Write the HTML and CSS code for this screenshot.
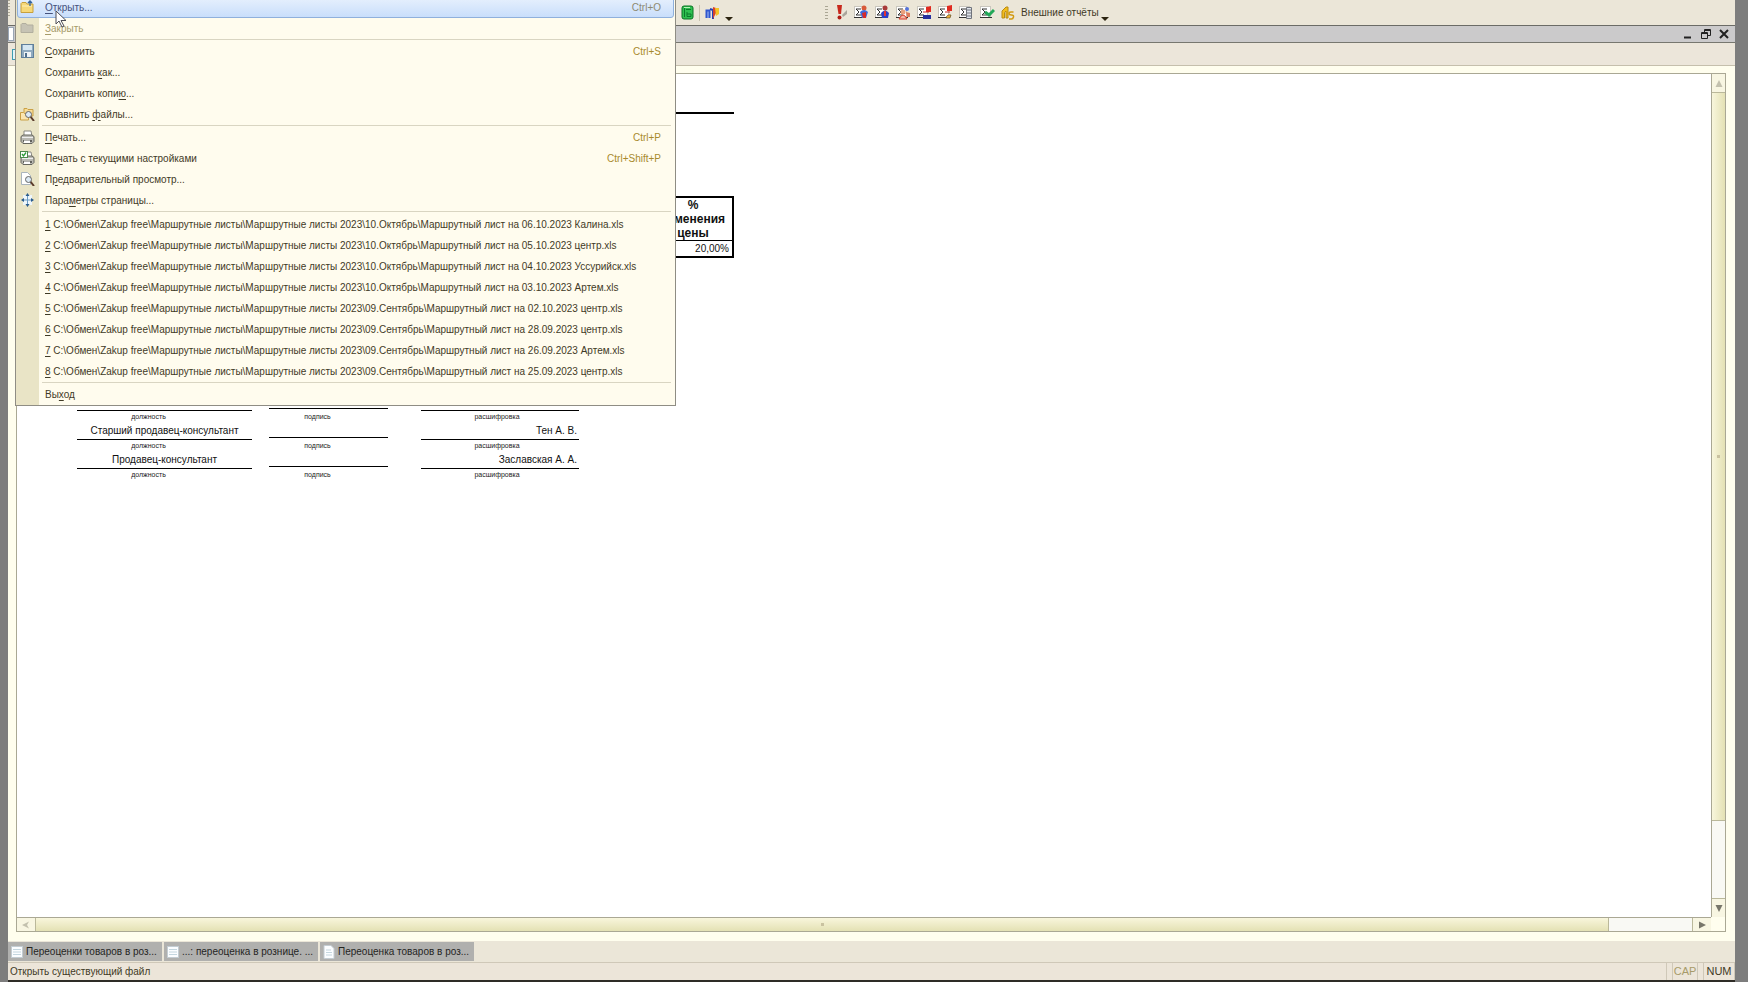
FILE: index.html
```html
<!DOCTYPE html>
<html lang="ru">
<head>
<meta charset="utf-8">
<title>Переоценка товаров в рознице</title>
<link rel="stylesheet" href="styles.css">
</head>
<body>
<svg width="0" height="0" class="defs" aria-hidden="true">
  <defs>
    <g id="sigma"><rect x="0.5" y="1.5" width="10" height="11" fill="#fff" stroke="#c9c6bd"/><path d="M7 4H2l3 3-3 3h5" fill="none" stroke="#333" stroke-width="1"/><path d="M0 12.5h12" stroke="#333"/></g>
    <g id="printer"><path d="M4 6V1h7l1 5" fill="#fff" stroke="#8a8a82"/><path d="M1 6.500l2-1.500h9l2 1.500v5l-2 2H3l-2-2z" fill="#b9b9b2" stroke="#66665f"/><path d="M2 7.500h11" stroke="#eee"/><path d="M3 11h9" stroke="#44443f" stroke-width="1.500"/><rect x="4" y="10.500" width="6" height="2.500" fill="#fff"/></g>
    <g id="lens"><path d="M10 9l4 5" stroke="#5a3a2a" stroke-width="2"/><circle cx="8.500" cy="7.500" r="3" fill="#dceaf5" stroke="#666"/></g>
    <g id="doc"><path d="M1 .5h7l3 3v10H1z" fill="#fbfdff" stroke="#c3ccd2"/><path d="M3 5h5M3 7.500h6M3 10h6" stroke="#c4d6df"/></g>
    <g id="list"><rect x=".5" y="1.500" width="11" height="11" fill="#fbfdff" stroke="#c3ccd2"/><path d="M2 4.500h8M2 7h8M2 9.500h8" stroke="#c4d6df"/></g>
  </defs>
</svg>
<div class="window">
  <div class="toolbar">
    <span class="grip edge-grip"></span>
    <div class="tools tools-left">
      <button aria-label="Справочник"><svg width="13" height="15" viewBox="0 0 13 15"><rect x="1" y="1" width="11" height="13" rx="2" fill="#2fc050" stroke="#087322"/><path d="M3.500 3v9M5 4.500h5M6 7v4.500h4V9H6" fill="none" stroke="#0b7a2a"/><path d="M3 2.500h6" stroke="#b6f2b6"/></svg></button>
      <span class="split"></span>
      <button aria-label="Помощь"><svg width="15" height="14" viewBox="0 0 15 14"><path d="M1.500 12V4.500h3V12" fill="#a9c0f2" stroke="#2f57cf" stroke-width="2"/><path d="M5 3l3 1v9" fill="none" stroke="#2540b5" stroke-width="2"/><path d="M8 1l3 1v5l-3 6z" fill="#d8442c"/><path d="M10 2h4v6l-3 2z" fill="#f5c326"/></svg></button>
      <button class="drop" aria-label="Ещё"></button>
    </div>
    <div class="tools tools-right">
      <span class="grip"></span>
      <button aria-label="Важно"><svg width="12" height="15" viewBox="0 0 12 15"><path d="M1 0h5L5 9H2.500z" fill="#c8281c"/><circle cx="3.500" cy="12.500" r="2" fill="#b01c14"/><path d="M6 10l5-5v4l-4 3z" fill="#aaa59b"/></svg></button>
      <button aria-label="Отчёт по покупателям"><svg width="15" height="15" viewBox="0 0 15 15"><use href="#sigma"/><circle cx="10" cy="3" r="2.500" fill="#d85a3a"/><path d="M6 7q4-4 8 0l-2 6H8z" fill="#3d6be0"/><path d="M8 8l4-1v6H9z" fill="#d62c2c"/></svg></button>
      <button aria-label="Отчёт по продавцам"><svg width="15" height="15" viewBox="0 0 15 15"><use href="#sigma"/><circle cx="10" cy="3" r="2.500" fill="#a83a3a"/><path d="M6 8q4-5 8 0l-1 5H7z" fill="#2c3fc8"/><path d="M9 6h2v5H9z" fill="#e03434"/></svg></button>
      <button aria-label="Отчёт по контрагентам"><svg width="15" height="15" viewBox="0 0 15 15"><use href="#sigma"/><circle cx="11" cy="4" r="2" fill="#5573d8"/><circle cx="7" cy="7" r="2.500" fill="#eaa07c"/><path d="M3 14q4-8 8 0z" fill="#f4b6a4" stroke="#d63c2c"/><path d="M10 7l4 1v4h-3z" fill="#e07a5a"/></svg></button>
      <button aria-label="Отчёт по продажам"><svg width="15" height="15" viewBox="0 0 15 15"><use href="#sigma"/><path d="M9 2l5-1v6H9z" fill="#e02a20"/><path d="M6 7h6" stroke="#c22"/><path d="M6 10h8v4H6z" fill="#26309e"/></svg></button>
      <button aria-label="Отчёт по закупкам"><svg width="15" height="15" viewBox="0 0 15 15"><use href="#sigma"/><path d="M9 1l5-1v6H9z" fill="#e02a20"/><path d="M7 7h5" stroke="#c22"/><path d="M8 13q1-4 5-3l-1 3z" fill="#eeb03a" stroke="#4a3a1a" stroke-width=".6"/></svg></button>
      <button aria-label="Ведомость"><svg width="15" height="15" viewBox="0 0 15 15"><use href="#sigma"/><path d="M7.500 2.500h5v11h-5zM7.500 5h5M7.500 8h5M7.500 11h5" fill="#dfe3ea" stroke="#70747c"/></svg></button>
      <button aria-label="Проверка"><svg width="15" height="15" viewBox="0 0 15 15"><use href="#sigma"/><path d="M5 7l4 3 5-5" fill="none" stroke="#22a858" stroke-width="3"/></svg></button>
      <button class="external"><svg width="14" height="14" viewBox="0 0 14 14"><path d="M1 12V5l4-4h2v11h-2V5L3.500 6.500V12z" fill="#f2bd1c" stroke="#b98a12"/><path d="M12.500 6h-2.500q-2 0-2 1.500t2.500 1.500 2 2-2 2H8" fill="none" stroke="#d29a10" stroke-width="1.500"/></svg><span>Внешние отчёты</span></button>
      <button class="drop" aria-label="Ещё"></button>
    </div>
  </div>
  <div class="titlebar">
    <span class="title-stub"></span>
    <button aria-label="Свернуть"><svg width="10" height="10" viewBox="0 0 10 10"><path d="M1 8.500h7" stroke="#222" stroke-width="2"/></svg></button>
    <button aria-label="Восстановить"><svg width="10" height="10" viewBox="0 0 10 10"><path d="M3.500 3V.5h6v6H7M.5 3.500h6v6h-6zM.5 4.500h6M3.500 1.500h6" fill="none" stroke="#222"/></svg></button>
    <button aria-label="Закрыть окно"><svg width="10" height="10" viewBox="0 0 10 10"><path d="M1 1l8 8M9 1L1 9" stroke="#222" stroke-width="2"/></svg></button>
  </div>
  <div class="subbar"><span class="sub-stub"></span></div>
  <main class="frame">
    <div class="viewer">
      <div class="sheet">
        <div class="rule"></div>
        <table class="prices">
          <thead><tr><th>%<br>изменения<br>цены</th></tr></thead>
          <tbody><tr><td>20,00%</td></tr></tbody>
        </table>
        <div class="signs">
          <div class="sign post"><span class="value"></span><span class="caption">должность</span></div>
          <div class="sign hand"><span class="value"></span><span class="caption">подпись</span></div>
          <div class="sign name"><span class="value"></span><span class="caption">расшифровка</span></div>
          <div class="sign post"><span class="value">Старший продавец-консультант</span><span class="caption">должность</span></div>
          <div class="sign hand"><span class="value"></span><span class="caption">подпись</span></div>
          <div class="sign name"><span class="value">Тен А. В.</span><span class="caption">расшифровка</span></div>
          <div class="sign post"><span class="value">Продавец-консультант</span><span class="caption">должность</span></div>
          <div class="sign hand"><span class="value"></span><span class="caption">подпись</span></div>
          <div class="sign name"><span class="value">Заславская А. А.</span><span class="caption">расшифровка</span></div>
        </div>
      </div>
      <div class="vscroll">
        <button aria-label="Вверх"><svg width="8" height="7" viewBox="0 0 8 7"><path d="M4 0l3.500 7h-7z" fill="#c3c1ae"/></svg></button>
        <div class="thumb"><i></i></div>
        <div class="track"></div>
        <button aria-label="Вниз"><svg width="8" height="7" viewBox="0 0 8 7"><path d="M4 7L.5 0h7z" fill="#77766a"/></svg></button>
      </div>
      <div class="hscroll">
        <button aria-label="Влево"><svg width="8" height="8" viewBox="0 0 8 8"><path d="M0 4l7-3.500L5 4l2 3.500z" fill="#c3c1ae"/></svg></button>
        <div class="thumb"><i></i></div>
        <div class="track"></div>
        <button aria-label="Вправо"><svg width="7" height="8" viewBox="0 0 7 8"><path d="M7 4L0 .5v7z" fill="#77766a"/></svg></button>
      </div>
      <div class="corner"></div>
    </div>
  </main>
  <div class="tabs">
    <button><svg width="12" height="14" viewBox="0 0 12 14"><use href="#list"/></svg><span>Переоценки товаров в роз...</span></button>
    <button><svg width="12" height="14" viewBox="0 0 12 14"><use href="#list"/></svg><span>...: переоценка в рознице. ...</span></button>
    <button><svg width="12" height="14" viewBox="0 0 12 14"><use href="#doc"/></svg><span>Переоценка товаров в роз...</span></button>
  </div>
  <footer class="status"><span class="hint">Открыть существующий файл</span><span class="key off">CAP</span><span class="key">NUM</span></footer>
</div>

<nav class="menu" aria-label="Файл">
  <button class="item active"><svg class="ic" width="15" height="14" viewBox="0 0 15 14"><path d="M1 12.500V3.500l1-1h4l1 1.500h6v8.500z" fill="#f6d878" stroke="#c7a03c"/><path d="M2 6h10" stroke="#fff0b8"/><path d="M10 6V1M8 3l2-2 2 2" fill="none" stroke="#35649c" stroke-width="1.300"/></svg><span><u>О</u>ткрыть...</span><kbd>Ctrl+O</kbd></button>
  <button class="item" disabled><svg class="ic" width="15" height="14" viewBox="0 0 15 14"><path d="M1 11.500v-8l1-1h4l1 1.500h6v7.500z" fill="#c6c3b4" stroke="#b1ae9e"/></svg><span><u>З</u>акрыть</span></button>
  <hr>
  <button class="item"><svg class="ic" width="15" height="14" viewBox="0 0 15 14"><rect x="1.500" y=".5" width="12" height="13" fill="#8faabf" stroke="#5f7f9b"/><rect x="3" y="1" width="9" height="5" fill="#d5e7f2"/><rect x="4" y="8" width="7" height="5" fill="#eef3f6"/><path d="M6 9v4" stroke="#4f6f8d" stroke-width="2"/></svg><span><u>С</u>охранить</span><kbd>Ctrl+S</kbd></button>
  <button class="item"><span>Сохранить <u>к</u>ак...</span></button>
  <button class="item"><span>Сохранить копи<u>ю</u>...</span></button>
  <button class="item"><svg class="ic" width="15" height="14" viewBox="0 0 15 14"><path d="M4 9V1.500h3l1 1h5V9z" fill="#f8dc96" stroke="#caa045"/><path d="M.5 13V5.500h3l1 1h4V13z" fill="#fbe6b0" stroke="#caa045"/><use href="#lens"/></svg><span>Сравнить <u>ф</u>айлы...</span></button>
  <hr>
  <button class="item"><svg class="ic" width="15" height="14" viewBox="0 0 15 14"><use href="#printer"/></svg><span><u>П</u>ечать...</span><kbd>Ctrl+P</kbd></button>
  <button class="item"><svg class="ic" width="15" height="14" viewBox="0 0 15 14"><use href="#printer"/><rect x=".5" y=".5" width="7" height="6" fill="#fff" stroke="#4c8a4c"/><path d="M2 3l1.500 2L6 1.500" fill="none" stroke="#2c9c38" stroke-width="1.300"/></svg><span>Пе<u>ч</u>ать с текущими настройками</span><kbd>Ctrl+Shift+P</kbd></button>
  <button class="item"><svg class="ic" width="15" height="14" viewBox="0 0 15 14"><path d="M1.500.5h6l3 3v9h-9z" fill="#fff" stroke="#a9b4bd"/><use href="#lens"/></svg><span>П<u>р</u>едварительный просмотр...</span></button>
  <button class="item"><svg class="ic" width="15" height="14" viewBox="0 0 15 14"><rect x="3" y="2" width="9" height="10" fill="#eef6fb"/><path d="M7.500 2v10M2 7h11" stroke="#6d9cc4"/><path d="M7.500 0l2 3h-4zM7.500 14l2-3h-4zM1 7l3-2v4zM14 7l-3-2v4z" fill="#2b5c8c"/></svg><span>Пара<u>м</u>етры страницы...</span></button>
  <hr class="wide">
  <button class="item"><span><u>1</u> C:\Обмен\Zakup free\Маршрутные листы\Маршрутные листы 2023\10.Октябрь\Маршрутный лист на 06.10.2023 Калина.xls</span></button>
  <button class="item"><span><u>2</u> C:\Обмен\Zakup free\Маршрутные листы\Маршрутные листы 2023\10.Октябрь\Маршрутный лист на 05.10.2023 центр.xls</span></button>
  <button class="item"><span><u>3</u> C:\Обмен\Zakup free\Маршрутные листы\Маршрутные листы 2023\10.Октябрь\Маршрутный лист на 04.10.2023 Уссурийск.xls</span></button>
  <button class="item"><span><u>4</u> C:\Обмен\Zakup free\Маршрутные листы\Маршрутные листы 2023\10.Октябрь\Маршрутный лист на 03.10.2023 Артем.xls</span></button>
  <button class="item"><span><u>5</u> C:\Обмен\Zakup free\Маршрутные листы\Маршрутные листы 2023\09.Сентябрь\Маршрутный лист на 02.10.2023 центр.xls</span></button>
  <button class="item"><span><u>6</u> C:\Обмен\Zakup free\Маршрутные листы\Маршрутные листы 2023\09.Сентябрь\Маршрутный лист на 28.09.2023 центр.xls</span></button>
  <button class="item"><span><u>7</u> C:\Обмен\Zakup free\Маршрутные листы\Маршрутные листы 2023\09.Сентябрь\Маршрутный лист на 26.09.2023 Артем.xls</span></button>
  <button class="item"><span><u>8</u> C:\Обмен\Zakup free\Маршрутные листы\Маршрутные листы 2023\09.Сентябрь\Маршрутный лист на 25.09.2023 центр.xls</span></button>
  <hr>
  <button class="item"><span>Вы<u>х</u>од</span></button>
</nav>
<svg class="pointer" width="13" height="19" viewBox="0 0 13 19" aria-hidden="true"><path d="M1 1v13l3-3 3 6 2-1-3-5.500h5z" fill="#fff" stroke="#4c4c55"/></svg>
</body>
</html>
```
FILE: styles.css
```css
* { box-sizing: border-box; }
body {
  margin: 0;
  min-height: 100vh;
  display: flex;
  padding: 0 13px 0 8px;
  background: #7d7d7d;
  font: 10px/14px "Liberation Sans", Arial, sans-serif;
  color: #3f3a26;
  overflow: hidden;
}
button {
  font: inherit;
  color: inherit;
  background: none;
  border: 0;
  padding: 0;
  display: flex;
  align-items: center;
}
svg { display: block; flex: none; }
.defs { position: absolute; }

.window {
  flex: 1;
  display: flex;
  flex-direction: column;
  background: #fffeee;
  border-bottom: 2px solid #2e2c26;
}

.toolbar {
  display: flex;
  height: 25px;
  background: #ebe6d8;
}
.tools { display: flex; align-items: center; gap: 6px; }
.tools-left { margin-left: 671px; gap: 5px; }
.tools-right { margin-left: 92px; }
.grip {
  width: 3px;
  height: 13px;
  margin-right: 2px;
  background: repeating-linear-gradient(#aaa694 0 1px, transparent 1px 3px);
}
.edge-grip { width: 2px; height: 18px; margin: 0; }
.split { width: 1px; height: 16px; background: #c9c3b0; }
.external { gap: 6px; }
.drop { width: 8px; height: 25px; }
.tools-right .drop { margin-left: -4px; }
.drop::after {
  content: "";
  margin-top: 12px;
  border: 4px solid transparent;
  border-top-color: #2c2410;
  border-bottom: 0;
}

.titlebar {
  display: flex;
  align-items: center;
  gap: 8px;
  height: 18px;
  padding-right: 6px;
  background: #cbcacb;
  border-top: 1px solid #6b6b66;
  border-bottom: 1px solid #77776f;
}
.title-stub { width: 6px; height: 14px; margin-right: auto; background: #fff; border: 1px solid #9aa6b5; }
.subbar {
  height: 23px;
  padding: 6px 0 0 4px;
  background: #ece6da;
  border-bottom: 1px solid #c5bfac;
}
.sub-stub { display: block; width: 6px; height: 11px; background: #e3f4f8; border: 1px solid #3e9cb0; }

.frame { flex: 1; display: flex; padding: 7px 9px 9px 8px; }
.viewer {
  flex: 1;
  display: grid;
  grid-template: 1fr 14px / 1fr 14px;
  background: #fffeee;
  border: 1px solid #aaa894;
}
.sheet {
  background: #fff;
  padding: 38px 0 0 60px;
  color: #111;
}
.rule { width: 657px; border-top: 2px solid #000; }
.prices {
  width: 82px;
  margin: 82px 0 0 575px;
  border-collapse: collapse;
  border: 2px solid #000;
}
.prices th { padding: 0; font-size: 12px; line-height: 14px; border-bottom: 1px solid #000; }
.prices td { padding: 0 3px; line-height: 15px; text-align: right; }
.signs {
  display: grid;
  grid-template-columns: 175px 119px 158px;
  column-gap: 17px;
  margin-top: 136px;
}
.name { margin-left: 16px; width: 158px; }
.sign { height: 29px; display: flex; flex-direction: column; }
.value {
  height: 17px;
  padding: 0 2px;
  border-bottom: 1px solid #000;
  line-height: 16px;
  text-align: center;
}
.name .value { text-align: right; }
.hand .value { height: 15px; margin-bottom: 2px; }
.caption { padding-right: 32px; font-size: 7px; line-height: 12px; text-align: center; color: #222; }
.hand .caption { padding-right: 22px; }
.name .caption { padding-right: 6px; }

.vscroll, .hscroll { display: flex; background: #f9f9f4; }
.vscroll { flex-direction: column; border-left: 1px solid #aaa894; }
.hscroll { border-top: 1px solid #aaa894; }
.vscroll button, .hscroll button { justify-content: center; background: #f8f6e2; }
.vscroll button { height: 18px; }
.hscroll button { width: 18px; }
.thumb { display: flex; align-items: center; justify-content: center; }
.thumb i { width: 3px; height: 3px; background: #c9c2a0; }
.vscroll .thumb { flex: 728; background: linear-gradient(90deg, #f8f6dc, #e4e1b4); border: solid #bab89a; border-width: 1px 0; }
.vscroll .track { flex: 77; border-bottom: 1px solid #bab89a; }
.hscroll .thumb { flex: 1575; background: linear-gradient(#f8f6dc, #e4e1b4); border: solid #bab89a; border-width: 0 1px; }
.hscroll .track { flex: 83; border-right: 1px solid #bab89a; }

.tabs { display: flex; gap: 2px; height: 21px; padding: 1px 0; background: #ebe6d8; }
.tabs button {
  width: 154px;
  gap: 3px;
  padding-left: 3px;
  background: #b0b0ae;
  color: #25251f;
  white-space: nowrap;
}
.status {
  display: flex;
  gap: 5px;
  height: 18px;
  background: #ece5d9;
  border-top: 1px solid #cfc8b8;
  line-height: 17px;
}
.hint { flex: 1; padding-left: 2px; border-right: 1px solid #cfc8b8; }
.key { width: 26px; font-size: 11px; text-align: center; border: solid #cfc8b8; border-width: 0 1px; }
.key:last-child { width: 32px; }
.off { color: #a79b6a; }

.menu {
  position: absolute;
  left: 15px;
  top: -4px;
  width: 661px;
  padding: 0 1px;
  background: linear-gradient(90deg, #e9e4c6 23px, #fffcee 23px);
  border: 1px solid #8f8d84;
  z-index: 2;
}
.item {
  position: relative;
  width: 100%;
  height: 21px;
  padding: 0 12px 0 27px;
  border: 1px solid transparent;
  white-space: nowrap;
}
.item kbd { margin-left: auto; font: inherit; color: #a88a2c; }
.item u { text-underline-offset: 2px; }
.ic { position: absolute; left: 2px; top: 2px; }
.item:disabled { color: #a79b6a; }
.active {
  color: #45527c;
  background: linear-gradient(#e6f0fd, #c9defb);
  border-color: #8fb0dc;
  border-radius: 3px;
}
.active kbd { color: #8d8a72; }
.menu hr { margin: 0 3px 0 25px; height: 2px; border: 0; border-top: 1px solid #d9d5c2; }
.menu .wide { height: 3px; }
.pointer { position: absolute; left: 55px; top: 10px; z-index: 3; }
```
